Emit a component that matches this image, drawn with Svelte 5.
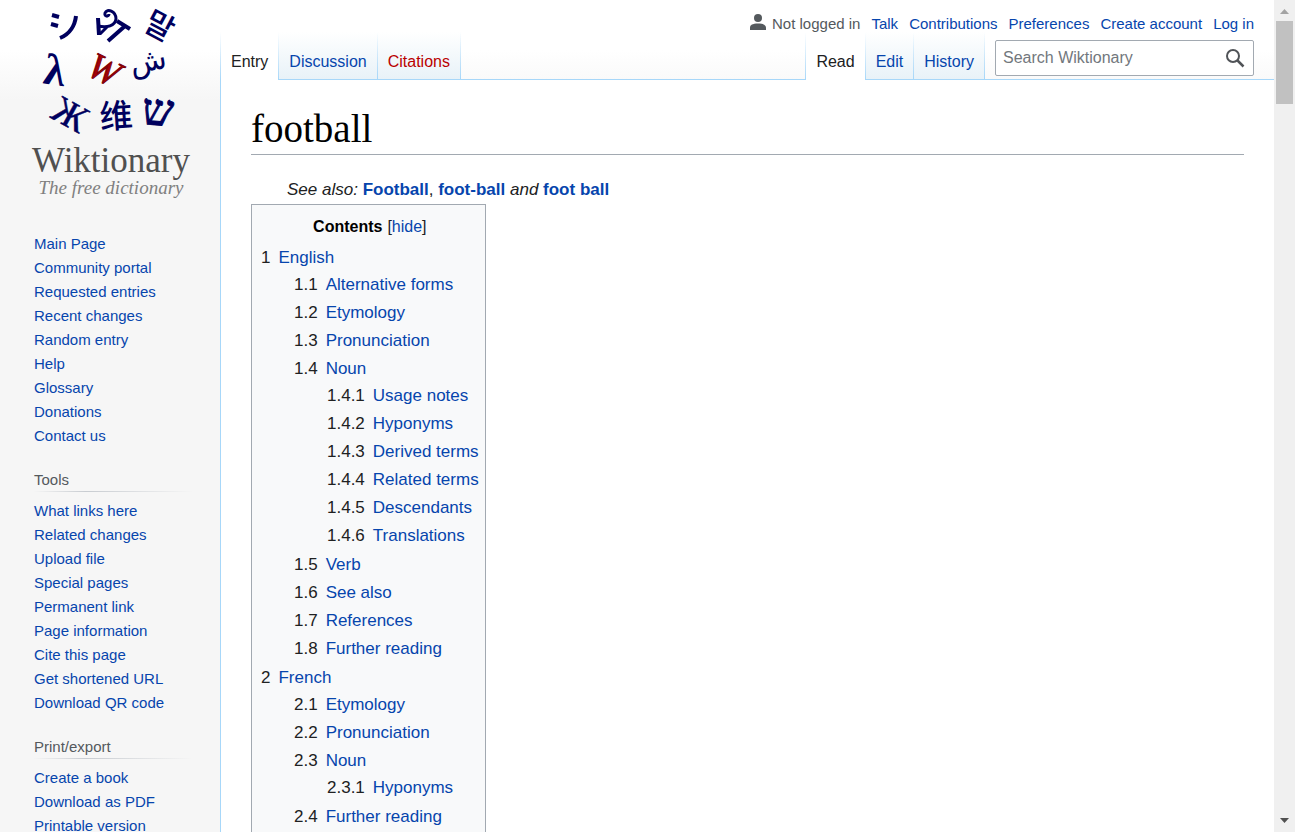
<script lang="ts">
  type Entry = { label: string; children?: Entry[] };

  const personal = ['Talk', 'Contributions', 'Preferences', 'Create account', 'Log in'];

  const portals = [
    {
      title: '',
      links: ['Main Page', 'Community portal', 'Requested entries', 'Recent changes', 'Random entry', 'Help', 'Glossary', 'Donations', 'Contact us']
    },
    {
      title: 'Tools',
      links: ['What links here', 'Related changes', 'Upload file', 'Special pages', 'Permanent link', 'Page information', 'Cite this page', 'Get shortened URL', 'Download QR code']
    },
    { title: 'Print/export', links: ['Create a book', 'Download as PDF', 'Printable version'] }
  ];

  const contents: Entry[] = [
    {
      label: 'English',
      children: [
        { label: 'Alternative forms' },
        { label: 'Etymology' },
        { label: 'Pronunciation' },
        {
          label: 'Noun',
          children: [
            { label: 'Usage notes' },
            { label: 'Hyponyms' },
            { label: 'Derived terms' },
            { label: 'Related terms' },
            { label: 'Descendants' },
            { label: 'Translations' }
          ]
        },
        { label: 'Verb' },
        { label: 'See also' },
        { label: 'References' },
        { label: 'Further reading' }
      ]
    },
    {
      label: 'French',
      children: [
        { label: 'Etymology' },
        { label: 'Pronunciation' },
        { label: 'Noun', children: [{ label: 'Hyponyms' }] },
        { label: 'Further reading' }
      ]
    }
  ];

  let open = $state(true);
</script>

{#snippet tree(items: Entry[], prefix: string)}
  <ul>
    {#each items as item, i}
      <li>
        <a href="#top"><span class="num">{prefix}{i + 1}</span><span>{item.label}</span></a>
        {#if item.children}
          {@render tree(item.children, `${prefix}${i + 1}.`)}
        {/if}
      </li>
    {/each}
  </ul>
{/snippet}

<div class="window">
  <div class="page">
    <aside>
      <a class="logo" href="#top" aria-label="Wiktionary, the free dictionary">
        <svg width="180" height="204" viewBox="20 0 180 204" text-anchor="middle">
          <g fill="#00005e">
            <g fill="none" stroke="#00005e" stroke-width="4">
              <path d="M52 15l7 2M51 24l7 2" />
              <path d="M76 16C75 25 70 34 60 38" />
            </g>
            <g fill="none" stroke="#00005e" stroke-width="4">
              <path d="M98 18L99 35" />
              <path d="M98 26C107 28 115 26 116 19C116 11 107 8 105 13C104 17 109 17 109 14M100 34L107 27" stroke-width="3" />
              <path d="M117 21L130 29M125 26L108 41" />
            </g>
            <text class="cjk" font-size="31" font-weight="500" transform="translate(160 25) rotate(28)" y="12">말</text>
            <text class="serif" font-size="44" font-weight="bold" transform="translate(55 70) rotate(8)" y="15">λ</text>
            <text class="arabic" font-size="30" transform="translate(149 66) rotate(-10)" y="5">ش</text>
            <text class="serif" font-size="38" stroke="#00005e" stroke-width="0.500" transform="translate(70 115) rotate(29)" y="12">Ж</text>
            <text class="cjk" font-size="33" font-weight="500" transform="translate(116 116) rotate(-4)" y="12">维</text>
            <text class="serif" font-size="44" stroke="#00005e" transform="translate(158 112) rotate(4)" y="13">ש</text>
          </g>
          <text class="serif" font-size="37" font-style="italic" fill="#a50006" stroke="#7a0006" transform="translate(104 70) rotate(26)" y="12">W</text>
          <text class="serif" font-size="35" fill="#505050" x="111" y="172">Wiktionary</text>
          <text class="serif" font-size="19" font-style="italic" fill="#808080" x="111" y="194">The free dictionary</text>
        </svg>
      </a>
      {#each portals as portal}
        <nav class="portal" aria-label={portal.title || 'Navigation'}>
          {#if portal.title}<h3>{portal.title}</h3>{/if}
          <ul>
            {#each portal.links as link}
              <li><a href="#top">{link}</a></li>
            {/each}
          </ul>
        </nav>
      {/each}
    </aside>

    <div class="column">
      <header>
        <nav class="personal" aria-label="Personal tools">
          <span class="anon">
            <svg width="16" height="16" viewBox="0 0 20 20" fill="#54595d" aria-hidden="true">
              <path d="M10 12C3 12 0 14 0 17V20H20V17C20 14 17 12 10 12z" />
              <circle cx="10" cy="5" r="5" />
            </svg>
            Not logged in
          </span>
          {#each personal as link}
            <a href="#top">{link}</a>
          {/each}
        </nav>
        <div class="bar">
          <nav class="tabs" aria-label="Namespaces">
            <a class="tab active" href="#top">Entry</a>
            <a class="tab" href="#top">Discussion</a>
            <a class="tab missing" href="#top">Citations</a>
          </nav>
          <nav class="tabs views" aria-label="Views">
            <a class="tab active" href="#top">Read</a>
            <a class="tab" href="#top">Edit</a>
            <a class="tab" href="#top">History</a>
          </nav>
          <form class="search" role="search">
            <input type="search" placeholder="Search Wiktionary" aria-label="Search Wiktionary" />
            <button type="button" aria-label="Search">
              <svg width="20" height="20" viewBox="0 0 20 20" fill="none" stroke="#505357" stroke-width="2" aria-hidden="true">
                <circle cx="8" cy="8" r="6" />
                <path d="M12 12L18.500 18.500" stroke-width="2.500" />
              </svg>
            </button>
          </form>
        </div>
      </header>

      <main id="top">
        <h1>football</h1>
        <p class="also"><i>See also:</i> <a href="#top">Football</a>, <a href="#top">foot-ball</a> <i>and</i> <a href="#top">foot ball</a></p>
        <nav class="toc" aria-label="Contents">
          <div class="toc-title">
            <h2>Contents</h2>
            <span>[<button type="button" onclick={() => (open = !open)}>{open ? 'hide' : 'show'}</button>]</span>
          </div>
          {#if open}{@render tree(contents, '')}{/if}
        </nav>
      </main>
    </div>
  </div>

  <div class="scroll" aria-hidden="true">
    <svg width="9" height="5" viewBox="0 0 9 5"><path d="M0 5L4.500 0L9 5z" fill="#a3a3a3" /></svg>
    <div class="thumb"></div>
    <svg width="9" height="5" viewBox="0 0 9 5"><path d="M0 0L4.500 5L9 0z" fill="#505050" /></svg>
  </div>
</div>

<style>
  :global(body) {
    font-family: 'Liberation Sans', Arial, sans-serif;
    color: #202122;
  }
  a {
    color: #0645ad;
    text-decoration: none;
  }
  a:hover {
    text-decoration: underline;
  }
  ul {
    list-style: none;
    margin: 0;
    padding: 0;
  }
  .window {
    display: flex;
    height: 100vh;
    overflow: hidden;
  }
  .page {
    flex: 1;
    min-width: 0;
    display: flex;
    overflow: hidden;
    background: linear-gradient(#fff 50px, #f6f6f6 100px);
  }
  aside {
    flex: none;
    width: 220px;
    font-size: 15px;
    line-height: 24px;
  }
  .logo {
    display: block;
    height: 204px;
    padding-left: 20px;
  }
  .logo svg {
    display: block;
    overflow: visible;
  }
  .serif {
    font-family: 'Liberation Serif', serif;
  }
  .cjk {
    font-family: 'Noto Sans CJK SC', 'Noto Sans CJK KR', sans-serif;
  }
  .arabic {
    font-family: 'DejaVu Sans', sans-serif;
  }
  .portal {
    padding: 0 28px 21px 34px;
  }
  .portal:first-of-type {
    padding-top: 28px;
  }
  .portal h3 {
    margin: 0 0 7px;
    font-size: 15px;
    line-height: 22px;
    font-weight: normal;
    color: #54595d;
    border-bottom: 1px solid;
    border-image: linear-gradient(to right, #c8ccd100, #c8ccd1 33%, #c8ccd100) 1;
  }
  .column {
    flex: 1;
    min-width: 0;
    display: flex;
    flex-direction: column;
  }
  .personal {
    display: flex;
    justify-content: flex-end;
    gap: 11px;
    padding: 14px 20px 0 0;
    height: 18px;
    font-size: 15px;
    line-height: 20px;
    white-space: nowrap;
  }
  .anon {
    display: flex;
    gap: 6px;
    color: #54595d;
  }
  .bar {
    display: flex;
    height: 48px;
    background: linear-gradient(#a7d7f9, #a7d7f9) bottom / 100% 1px no-repeat;
  }
  .tabs {
    display: flex;
    padding-left: 1px;
    background: linear-gradient(#a7d7f900, #a7d7f9) left / 1px 100% no-repeat;
  }
  .views {
    margin-left: auto;
  }
  .tab {
    box-sizing: border-box;
    height: 47px;
    padding: 20px 11px 0 10px;
    font-size: 16px;
    line-height: 20px;
    background:
      linear-gradient(#a7d7f900, #a7d7f9) right / 1px 100% no-repeat,
      linear-gradient(#fff, #e8f2f8);
  }
  .tab.active {
    height: 48px;
    color: #202122;
    background:
      linear-gradient(#a7d7f900, #a7d7f9) right / 1px 100% no-repeat,
      #fff;
  }
  .tab.missing {
    color: #ba0000;
  }
  .search {
    box-sizing: border-box;
    display: flex;
    width: 20%;
    min-width: 259px;
    height: 36px;
    margin: 8px 20px 0 10px;
    background: #fff;
    border: 1px solid #a2a9b1;
    border-radius: 2px;
  }
  .search input {
    flex: 1;
    min-width: 0;
    padding: 0 0 0 7px;
    border: 0;
    outline: 0;
    background: none;
    font: 16px 'Liberation Sans', Arial, sans-serif;
  }
  .search input::placeholder {
    color: #72777d;
  }
  .search button {
    display: flex;
    align-items: center;
    padding: 0 8px;
    border: 0;
    background: none;
  }
  main {
    flex: 1;
    padding: 26px 30px 0;
    background: #fff;
    border-left: 1px solid #a7d7f9;
  }
  h1 {
    margin: 0;
    padding-bottom: 2px;
    font: 39px/46px 'Liberation Serif', Georgia, serif;
    color: #000;
    border-bottom: 1px solid #a2a9b1;
  }
  .also {
    margin: 22px 0 2px 36px;
    font-size: 17px;
    line-height: 25px;
  }
  .also a {
    font-weight: bold;
  }
  .toc {
    width: fit-content;
    padding: 9px 6px 8px 9px;
    background: #f8f9fa;
    border: 1px solid #a2a9b1;
    font-size: 17px;
    line-height: 26px;
  }
  .toc-title {
    display: flex;
    justify-content: center;
    gap: 5px;
    margin-bottom: 5px;
    font-size: 16px;
  }
  .toc-title h2 {
    margin: 0;
    font-size: 16px;
    color: #000;
  }
  .toc-title button {
    padding: 0;
    border: 0;
    background: none;
    font: inherit;
    color: #0645ad;
    cursor: pointer;
  }
  .toc li {
    margin-bottom: 2px;
  }
  .toc li a {
    display: flex;
    gap: 8px;
  }
  .toc ul ul {
    margin: 1px 0 3px 33px;
  }
  .num {
    color: #202122;
  }
  .scroll {
    flex: none;
    box-sizing: border-box;
    width: 21px;
    padding: 9px 2px;
    display: flex;
    flex-direction: column;
    align-items: center;
    background: #f0f0f0;
  }
  .thumb {
    width: 17px;
    height: 83px;
    margin: 7px 0 auto;
    background: #c1c1c1;
  }
</style>
